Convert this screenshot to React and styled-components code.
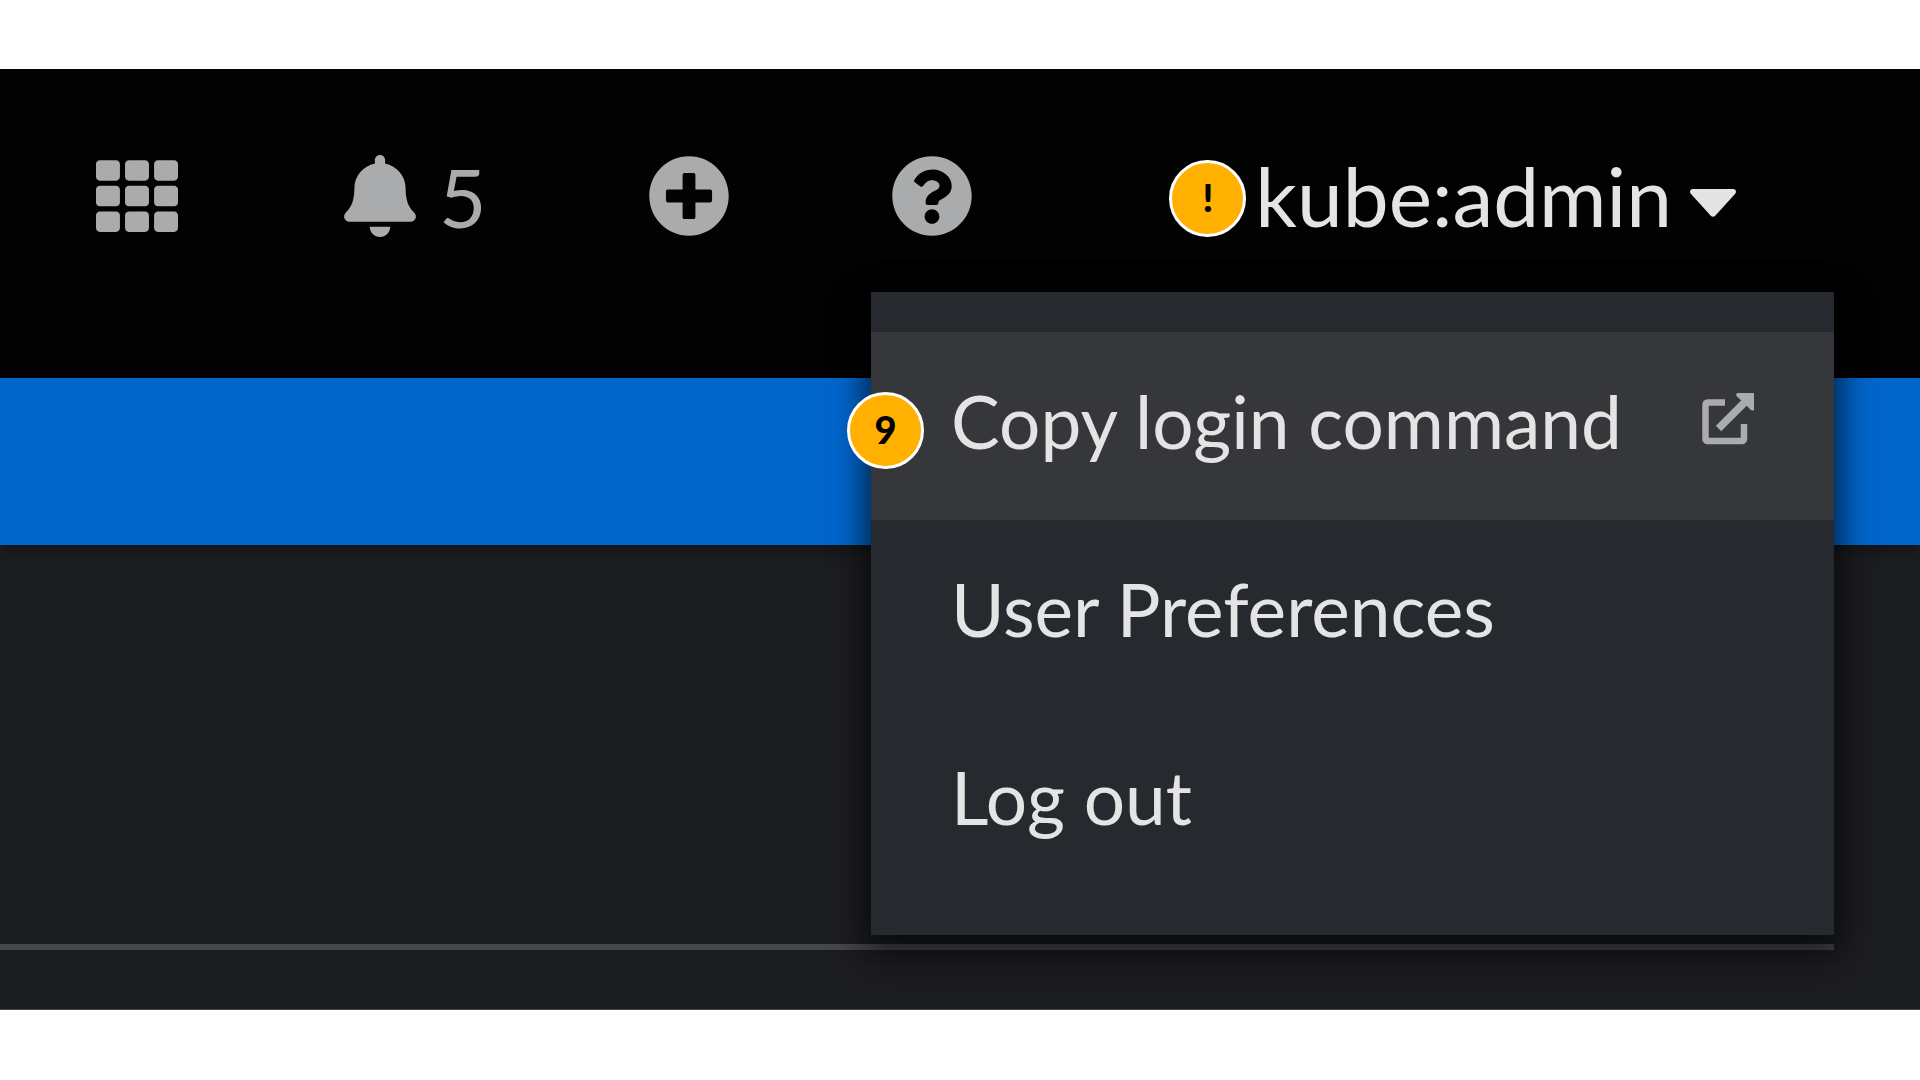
import React from "react";
import styled, { createGlobalStyle } from "styled-components";
import { FaTh, FaBell, FaPlusCircle, FaQuestionCircle } from "react-icons/fa";

const GlobalStyle = createGlobalStyle`
  * { box-sizing: border-box; }
  body {
    margin: 0;
    background: #fff;
    font-family: Lato, "Open Sans", sans-serif;
  }
`;

const Page = styled.div`
  padding: 69px 0 70px;
  overflow: hidden;
`;

const Masthead = styled.header`
  position: relative;
  z-index: 2;
  display: flex;
  align-items: center;
  padding: 57px 184px 112px 96px;
  background: #020202;
`;

const Tools = styled.nav`
  display: flex;
  align-items: center;
  gap: 161px;
`;

const ToolButton = styled.button`
  display: flex;
  align-items: center;
  gap: 18px;
  height: 140px;
  padding: 0;
  border: 0;
  background: none;
  color: #aaabac;
  font-family: inherit;
  font-size: 82px;
  line-height: 98px;
`;

const UserToggle = styled(ToolButton)`
  position: relative;
  margin-left: auto;
  padding-bottom: 2px;
  color: #e4e4e4;
`;

const Marker = styled.span`
  position: absolute;
  top: ${(p) => p.$top}px;
  left: ${(p) => p.$left}px;
  display: flex;
  align-items: center;
  justify-content: center;
  width: 77px;
  height: 77px;
  padding-bottom: 4px;
  border: 3px solid #fff;
  border-radius: 50%;
  background: #ffb000;
  color: #000;
  font-size: 38px;
  font-weight: 900;
  line-height: 40px;
`;

const Menu = styled.ul`
  position: absolute;
  top: 223px;
  right: 86px;
  width: 963px;
  margin: 0;
  padding: 40px 0 39px;
  list-style: none;
  background: #26292d;
  box-shadow: 0 19px 37px 5px rgba(3, 3, 3, 0.48), 0 0 19px 9px rgba(3, 3, 3, 0.24);
`;

const MenuRow = styled.li`
  position: relative;
  background: ${(p) => (p.$active ? "#36373a" : "transparent")};
`;

const MenuLink = styled.a`
  display: flex;
  align-items: center;
  justify-content: space-between;
  height: 188px;
  padding: 0 80px 10px;
  color: #e4e4e4;
  font-size: 73px;
  line-height: 100px;
  text-decoration: none;
`;

const Banner = styled.div`
  position: relative;
  z-index: 1;
  height: 167px;
  background: #0066cc;
  box-shadow: 0 4px 12px rgba(3, 3, 3, 0.4);
`;

const Content = styled.main`
  height: 465px;
  padding: 399px 86px 0 0;
  border-bottom: 1px solid #46474a;
  background: #1c1d20;
`;

const Divider = styled.hr`
  height: 6px;
  margin: 0;
  border: 0;
  background: #46474a;
`;

const CaretIcon = styled.svg`
  width: 46px;
  height: 28px;
  margin-top: 16px;
`;

const LinkIcon = styled.svg`
  width: 52px;
  height: 52px;
  margin-bottom: 4px;
`;

const Caret = () => (
  <CaretIcon viewBox="0 0 46 28" fill="currentColor" aria-hidden="true">
    <path d="M2.8 0h40.4c2.5 0 3.7 3 2 4.800L25 27c-1.100 1.100-2.900 1.100-4 0L.8 4.800C-.9 3 .3 0 2.800 0z" />
  </CaretIcon>
);

const ExternalLink = () => (
  <LinkIcon viewBox="0 0 52 52" fill="none" stroke="#aaabac" aria-hidden="true">
    <path d="M23 9.500H5.500a2 2 0 0 0-2 2V46a2 2 0 0 0 2 2H40a2 2 0 0 0 2-2V31" strokeWidth="6.500" />
    <path d="M16.500 35.500L43 9" strokeWidth="7.500" />
    <path d="M35 0H51a1 1 0 0 1 1 1V17q-1.500 1-3 0L34.500 3q-1-1.500.5-3z" fill="#aaabac" stroke="none" />
  </LinkIcon>
);

export default function App() {
  return (
    <>
      <GlobalStyle />
      <Page>
        <Masthead>
          <Tools aria-label="Tools">
            <ToolButton aria-label="Applications">
              <FaTh />
            </ToolButton>
            <ToolButton aria-label="Notifications">
              <FaBell />
              <span>5</span>
            </ToolButton>
            <ToolButton aria-label="Add">
              <FaPlusCircle />
            </ToolButton>
            <ToolButton aria-label="Help">
              <FaQuestionCircle />
            </ToolButton>
          </Tools>
          <UserToggle aria-expanded="true">
            <Marker $top={34} $left={-86}>!</Marker>
            <span>kube:admin</span>
            <Caret />
          </UserToggle>
          <Menu>
            <MenuRow $active>
              <MenuLink href="#login">
                Copy login command
                <ExternalLink />
              </MenuLink>
              <Marker $top={60} $left={-24}>9</Marker>
            </MenuRow>
            <MenuRow>
              <MenuLink href="#preferences">User Preferences</MenuLink>
            </MenuRow>
            <MenuRow>
              <MenuLink href="#logout">Log out</MenuLink>
            </MenuRow>
          </Menu>
        </Masthead>
        <Banner />
        <Content>
          <Divider />
        </Content>
      </Page>
    </>
  );
}
